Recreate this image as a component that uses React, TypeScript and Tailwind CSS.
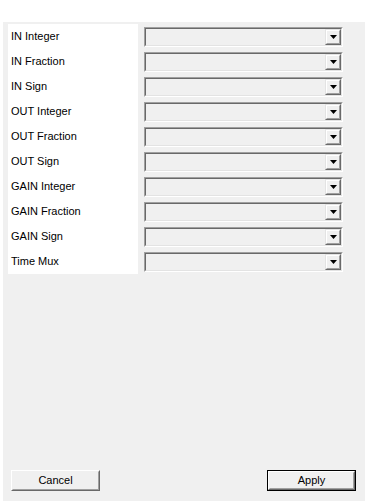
const FIELDS = [
  'IN Integer',
  'IN Fraction',
  'IN Sign',
  'OUT Integer',
  'OUT Fraction',
  'OUT Sign',
  'GAIN Integer',
  'GAIN Fraction',
  'GAIN Sign',
  'Time Mux',
];

function ComboBox() {
  return (
    <div className="h-[20px] w-[199px] border border-t-[#a0a0a0] border-l-[#a0a0a0] border-b-white border-r-white">
      <div className="flex h-full w-full justify-end border border-t-[#696969] border-l-[#696969] border-b-[#e3e3e3] border-r-[#e3e3e3] bg-[#f0f0f0]">
        <div className="h-full w-[16px] border border-t-[#e3e3e3] border-l-[#e3e3e3] border-b-[#696969] border-r-[#696969]">
          <div className="flex h-full w-full items-center justify-center border border-t-white border-l-white border-b-[#a0a0a0] border-r-[#a0a0a0] bg-[#f0f0f0]">
            <svg width="7" height="4" viewBox="0 0 7 4">
              <path d="M0 0h7L3.5 4z" fill="#000" />
            </svg>
          </div>
        </div>
      </div>
    </div>
  );
}

function Button({ label, isDefault }: { label: string; isDefault?: boolean }) {
  return (
    <div className={isDefault ? 'h-[21px] w-[89px] border border-black' : 'h-[21px] w-[89px]'}>
      <div className="h-full w-full border border-t-white border-l-white border-b-[#696969] border-r-[#696969]">
        <div className="flex h-full w-full items-center justify-center border border-t-[#f0f0f0] border-l-[#f0f0f0] border-b-[#a0a0a0] border-r-[#a0a0a0] bg-[#f0f0f0] text-[11px] text-black">
          {label}
        </div>
      </div>
    </div>
  );
}

export default function App() {
  return (
    <div
      className="h-[501px] w-[368px] bg-white px-[3px] pt-[22px]"
      style={{ fontFamily: '"Liberation Sans", Arial, sans-serif' }}
    >
      <div className="flex h-full flex-col bg-[#f0f0f0]">
        {/* Field list */}
        <div className="mt-[2px] flex">
          <div className="ml-[5px] w-[130px] bg-white">
            {FIELDS.map((f) => (
              <div key={f} className="flex h-[25px] items-center pl-[3px] text-[11px] text-black">
                {f}
              </div>
            ))}
          </div>
          <div className="ml-[6px]">
            {FIELDS.map((f) => (
              <div key={f} className="h-[25px] pt-[3px]">
                <ComboBox />
              </div>
            ))}
          </div>
        </div>

        {/* Footer buttons */}
        <div className="mt-auto flex justify-between pb-[10px] pl-[8px] pr-[9px]">
          <Button label="Cancel" />
          <Button label="Apply" isDefault />
        </div>
      </div>
    </div>
  );
}
